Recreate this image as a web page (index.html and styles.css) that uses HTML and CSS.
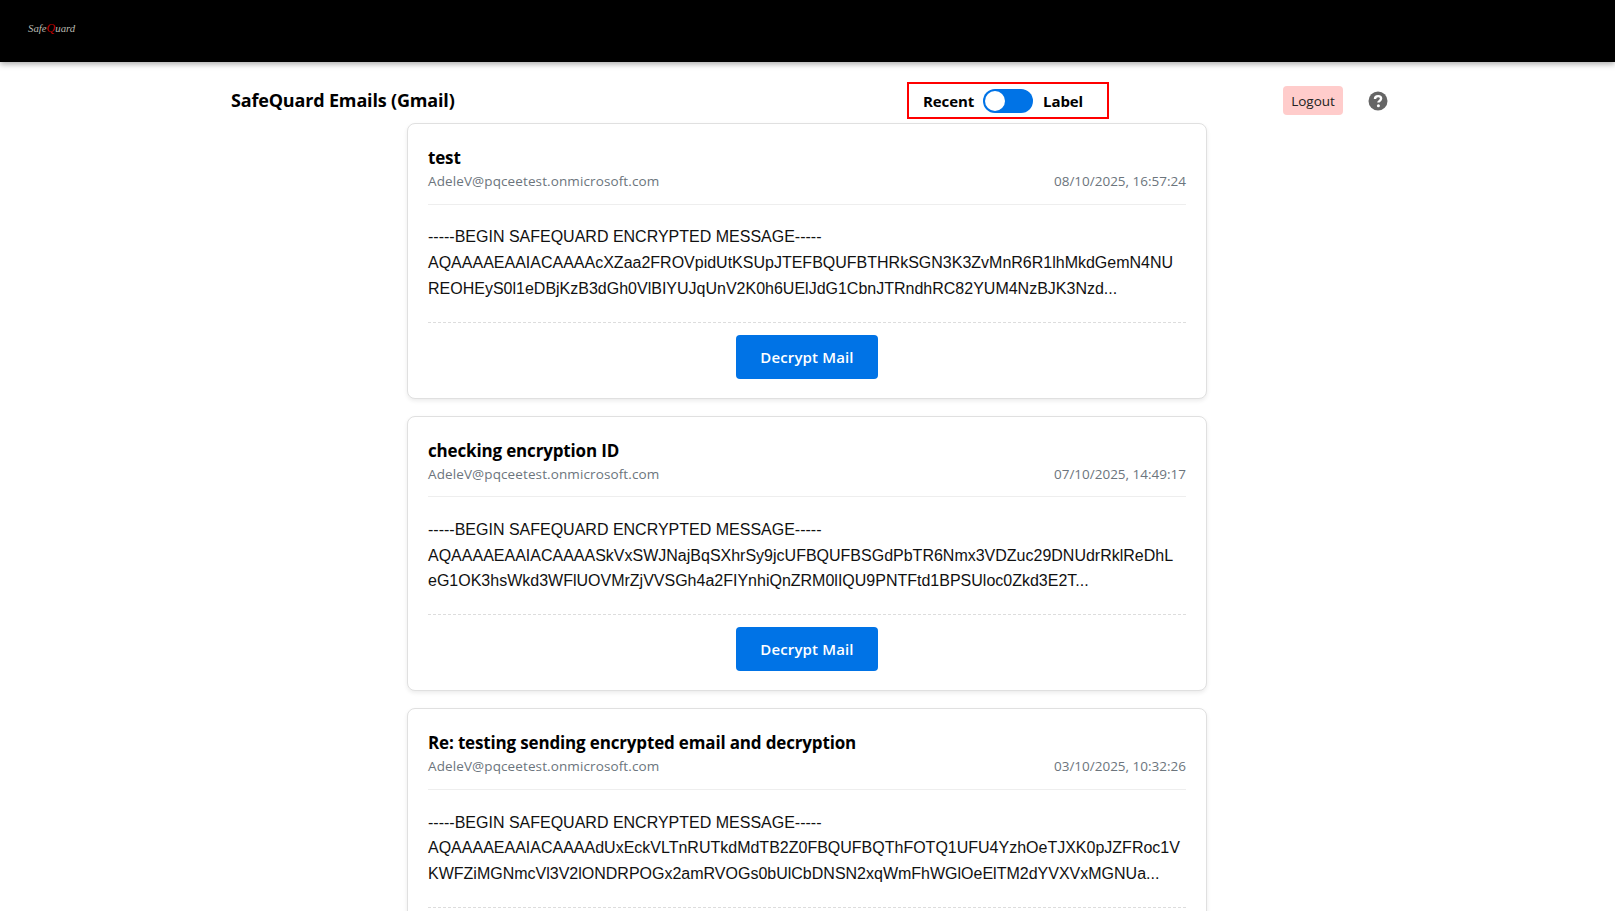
FILE: index.html
```html
<!DOCTYPE html>
<html lang="en">
<head>
<meta charset="utf-8">
<title>SafeQuard Emails</title>
<link rel="stylesheet" href="styles.css">
</head>
<body>
<header class="topbar">
  <span class="logo">Safe<span class="logo-q">Q</span>uard</span>
</header>
<main class="page">
  <div class="toolbar">
    <h1 class="page-title">SafeQuard Emails (Gmail)</h1>
    <div class="mode-switch">
      <span class="mode-label">Recent</span>
      <span class="toggle"><span class="knob"></span></span>
      <span class="mode-label">Label</span>
    </div>
    <div class="actions">
      <button class="logout">Logout</button>
      <svg class="help" viewBox="0 0 20 20" width="20" height="20" aria-hidden="true">
        <circle cx="10" cy="10" r="9.5" fill="#666"/>
        <path d="M7 7.9c0-1.8 1.3-2.8 3.1-2.8s3 1 3 2.5c0 1.2-.7 1.8-1.6 2.4-.7.4-1.1.8-1.1 1.6" fill="none" stroke="#fff" stroke-width="2.4"/>
        <circle cx="10.4" cy="14.8" r="1.5" fill="#fff"/>
      </svg>
    </div>
  </div>
  <section class="list">
    <article class="card">
      <h2 class="subject">test</h2>
      <div class="meta"><span class="sender">AdeleV@pqceetest.onmicrosoft.com</span><span>08/10/2025, 16:57:24</span></div>
      <p class="body-text">-----BEGIN SAFEQUARD ENCRYPTED MESSAGE-----<br>AQAAAAEAAIACAAAAcXZaa2FROVpidUtKSUpJTEFBQUFBTHRkSGN3K3ZvMnR6R1lhMkdGemN4NU<br>REOHEyS0l1eDBjKzB3dGh0VlBIYUJqUnV2K0h6UElJdG1CbnJTRndhRC82YUM4NzBJK3Nzd...</p>
      <div class="card-foot"><button class="decrypt">Decrypt Mail</button></div>
    </article>
    <article class="card">
      <h2 class="subject">checking encryption ID</h2>
      <div class="meta"><span class="sender">AdeleV@pqceetest.onmicrosoft.com</span><span>07/10/2025, 14:49:17</span></div>
      <p class="body-text">-----BEGIN SAFEQUARD ENCRYPTED MESSAGE-----<br>AQAAAAEAAIACAAAASkVxSWJNajBqSXhrSy9jcUFBQUFBSGdPbTR6Nmx3VDZuc29DNUdrRklReDhL<br>eG1OK3hsWkd3WFlUOVMrZjVVSGh4a2FIYnhiQnZRM0lIQU9PNTFtd1BPSUloc0Zkd3E2T...</p>
      <div class="card-foot"><button class="decrypt">Decrypt Mail</button></div>
    </article>
    <article class="card">
      <h2 class="subject">Re: testing sending encrypted email and decryption</h2>
      <div class="meta"><span class="sender">AdeleV@pqceetest.onmicrosoft.com</span><span>03/10/2025, 10:32:26</span></div>
      <p class="body-text">-----BEGIN SAFEQUARD ENCRYPTED MESSAGE-----<br>AQAAAAEAAIACAAAAdUxEckVLTnRUTkdMdTB2Z0FBQUFBQThFOTQ1UFU4YzhOeTJXK0pJZFRoc1V<br>KWFZiMGNmcVl3V2lONDRPOGx2amRVOGs0bUlCbDNSN2xqWmFhWGlOeElTM2dYVXVxMGNUa...</p>
    </article>
  </section>
</main>
</body>
</html>
```
FILE: styles.css
```css
* { box-sizing: border-box; }
html, body { margin: 0; height: 100%; overflow: hidden; background: #fff; }
body { font-family: "Open Sans", "Noto Sans", sans-serif; color: #000; }
.topbar {
  height: 62px; background: #000; display: flex; align-items: center;
  padding: 0 0 6px 28px; box-shadow: 0 2px 6px rgba(0,0,0,.35);
}
.logo { font: italic 10.8px "Liberation Serif", serif; color: #b9b9b0; }
.logo-q { color: #c00000; font-size: 12px; }
.page { width: 1161px; margin-left: 227px; }
.toolbar { height: 61px; display: flex; align-items: center; padding: 16px 0 0 4px; }
.page-title { margin: 0 0 2px; font-size: 18px; font-weight: 700; width: 676px; letter-spacing: -.17px; }
.mode-switch {
  width: 202px; height: 37px; border: 2px solid #f00; display: flex; align-items: center;
  padding-left: 14px; gap: 9px;
}
.mode-label { font-size: 15px; font-weight: 700; letter-spacing: -.1px; }
.toggle { width: 50px; height: 24px; border-radius: 12px; background: #0073e6; padding: 2px; display: block; flex: none; margin-right: 1px; }
.knob { display: block; width: 20px; height: 20px; border-radius: 50%; background: #fff; }
.actions { margin-left: auto; display: flex; align-items: center; gap: 25px; }
.logout { border: 0; background: #ffcccb; border-radius: 4px; height: 29px; width: 60px; padding: 0; font: 13.5px "Open Sans", sans-serif; color: #222; }
.list { width: 800px; margin-left: 180px; display: flex; flex-direction: column; gap: 17px; }
.card {
  height: 275.6px; border: 1px solid #e0e0e0; border-radius: 8px; background: #fff;
  padding: 21px 20px 0; box-shadow: 0 2px 4px rgba(0,0,0,.08); flex: none;
}
.subject { margin: 0; font-size: 17px; font-weight: 700; line-height: 26px; letter-spacing: -.16px; }
.meta {
  display: flex; justify-content: space-between; font-size: 13.5px; color: #6c757d;
  line-height: 20px; height: 33.7px; border-bottom: 1px solid #eee;
}
.sender { letter-spacing: .11px; }
.body-text { margin: 0; padding-top: 19.7px; height: 118px; border-bottom: 1px dashed #ddd; font: 16px/25.6px "Liberation Sans", sans-serif; color: #111; white-space: nowrap; }
.card-foot { display: flex; justify-content: center; padding-top: 12px; }
.decrypt { width: 142px; height: 44px; border: 0; border-radius: 4px; background: #0073e6; color: #fff; font: 600 15px "Open Sans", sans-serif; letter-spacing: .15px; }
```
